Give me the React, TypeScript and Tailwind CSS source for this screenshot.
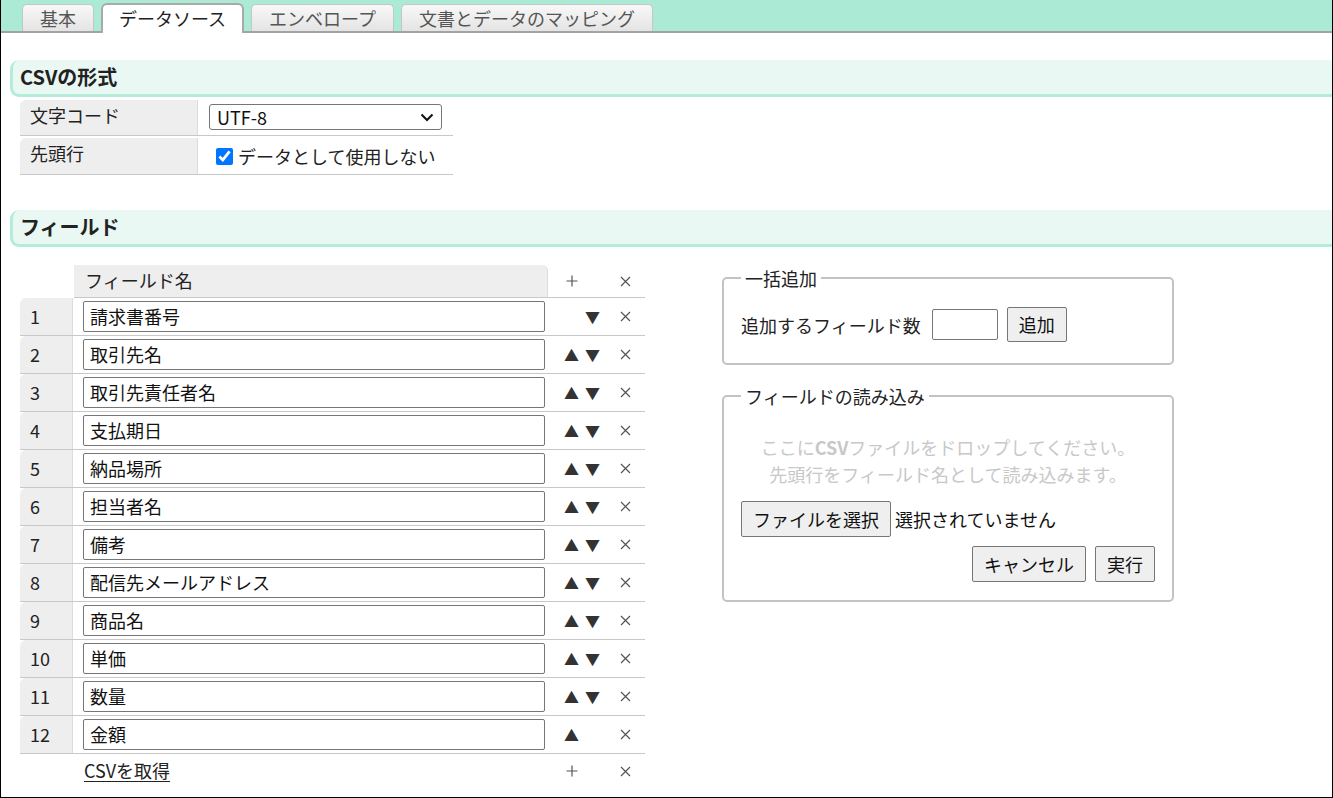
import React from 'react';

const fields = ['請求書番号','取引先名','取引先責任者名','支払期日','納品場所','担当者名','備考','配信先メールアドレス','商品名','単価','数量','金額'];

function Tab({ label, w, active }: { label: string; w: string; active?: boolean }) {
  if (active) {
    return (
      <div className={`${w} h-[30px] -mb-[2px] bg-white border-2 border-b-0 border-[#a9a9a9] rounded-t-[6px] flex items-center justify-center text-[#222] pb-[2px]`}>
        {label}
      </div>
    );
  }
  return (
    <div className={`${w} h-[27px] bg-gradient-to-b from-[#f8f8f8] to-[#e4e4e4] border border-b-0 border-[#c6c6c6] rounded-t-[5px] flex items-center justify-center text-[#555] pb-[1px]`}>
      {label}
    </div>
  );
}

function SectionHeader({ title }: { title: string }) {
  return (
    <div className="ml-[9px] h-[37px] bg-[#e9f8f3] border-l-[3px] border-b-[3px] border-[#b5ecd9] rounded-l-[9px] flex items-center pl-[7px]">
      <span className="font-bold text-[20px] text-[#222] leading-none">{title}</span>
    </div>
  );
}

function Btn({ children, className = '' }: { children: React.ReactNode; className?: string }) {
  return (
    <div className={`bg-[#efefef] border border-[#767676] rounded-[2px] flex items-center justify-center text-[#111] pb-[1px] ${className}`}>
      {children}
    </div>
  );
}

function Cross() {
  return (
    <svg width="11" height="11" viewBox="0 0 11 11" className="mx-auto">
      <path d="M1 1 L10 10 M10 1 L1 10" stroke="#555" strokeWidth="1.2" fill="none" />
    </svg>
  );
}

function Plus() {
  return (
    <svg width="12" height="12" viewBox="0 0 12 12" className="mx-auto">
      <path d="M6 0.5 V11.5 M0.5 6 H11.5" stroke="#555" strokeWidth="1.2" fill="none" />
    </svg>
  );
}

export default function App() {
  return (
    <div className="w-[1333px] h-[798px] border-l border-r border-b border-black bg-white overflow-hidden font-['Noto_Sans_CJK_JP','Noto_Sans',sans-serif] text-[18px] leading-[24px] text-[#222]">
      {/* Tab bar */}
      <div className="h-[33px] bg-[#abebd6] border-b-2 border-[#a3a3a3] flex items-end pl-[21px] gap-[7px]">
        <Tab label="基本" w="w-[72px]" />
        <Tab label="データソース" w="w-[143px]" active />
        <Tab label="エンベロープ" w="w-[143px]" />
        <Tab label="文書とデータのマッピング" w="w-[252px]" />
      </div>

      <div className="mt-[27px]">
        <SectionHeader title="CSVの形式" />
      </div>

      {/* CSV format table */}
      <div className="mt-[3px] ml-[19px] w-[433px]">
        <div className="flex h-[36px] border-b border-[#c8c8c8]">
          <div className="w-[178px] bg-[#eeeeee] rounded-tl-[6px] border-r border-[#dcdcdc] pl-[10px] pt-[3px]">文字コード</div>
          <div className="flex-1 pl-[11px] pt-[4px]">
            <div className="w-[233px] h-[26px] border border-[#767676] rounded-[3px] flex items-center justify-between pl-[7px] pr-[7px] text-[#111]">
              <span>UTF-8</span>
              <svg width="14" height="9" viewBox="0 0 14 9"><polyline points="1.5,1.5 7,7 12.5,1.5" fill="none" stroke="#111" strokeWidth="2" /></svg>
            </div>
          </div>
        </div>
        <div className="flex h-[37px] mt-[2px] border-b border-[#c8c8c8]">
          <div className="w-[178px] bg-[#eeeeee] rounded-tl-[6px] border-r border-[#dcdcdc] pl-[10px] pt-[3px]">先頭行</div>
          <div className="flex-1 pl-[18px] flex items-center">
            <input type="checkbox" defaultChecked className="w-[17px] h-[17px] accent-[#0075ff] m-0" />
            <span className="ml-[5px]">データとして使用しない</span>
          </div>
        </div>
      </div>

      <div className="mt-[35px]">
        <SectionHeader title="フィールド" />
      </div>

      <div className="flex mt-[18px]">
        {/* Field table */}
        <div className="ml-[19px] w-[625px]">
          {/* header */}
          <div className="flex h-[33px]">
            <div className="w-[54px]" />
            <div className="flex-1 flex border-b border-[#c8c8c8]">
              <div className="w-[474px] bg-[#eeeeee] rounded-tr-[6px] border-r border-[#dcdcdc] pl-[11px] flex items-center pb-[2px]">フィールド名</div>
              <div className="flex items-center pl-[13px]">
                <span className="w-[21px]"><Plus /></span>
                <span className="w-[21px]" />
                <span className="w-[22px] ml-[11px]"><Cross /></span>
              </div>
            </div>
          </div>
          {fields.map((f, i) => (
            <div key={i} className="flex h-[38px] border-b border-[#c8c8c8]">
              <div className="w-[53px] bg-[#eeeeee] rounded-tl-[6px] border-r border-[#dcdcdc] pl-[10px] flex items-center pb-[2px]">{i + 1}</div>
              <div className="w-[475px] pl-[10px] flex items-center">
                <div className="w-[462px] h-[31px] border border-[#767676] rounded-[2px] pl-[6px] pb-[2px] flex items-center text-[#111]">{f}</div>
              </div>
              <div className="flex items-center pl-[13px] text-[#333]">
                <span className="w-[21px] text-center text-[15px]">{i > 0 ? '▲' : ''}</span>
                <span className="w-[21px] text-center text-[15px]">{i < fields.length - 1 ? '▼' : ''}</span>
                <span className="w-[22px] ml-[11px]"><Cross /></span>
              </div>
            </div>
          ))}
          <div className="flex h-[34px]">
            <div className="w-[64px]" />
            <div className="w-[464px] flex items-center pb-[2px]">
              <span className="underline underline-offset-[3px] text-[#222]">CSVを取得</span>
            </div>
            <div className="flex items-center pl-[13px]">
              <span className="w-[21px]"><Plus /></span>
              <span className="w-[21px]" />
              <span className="w-[22px] ml-[11px]"><Cross /></span>
            </div>
          </div>
        </div>

        {/* Right column */}
        <div className="ml-[77px] mt-[4px] flex flex-col gap-[22px]">
          <fieldset className="w-[452px] border-2 border-[#c3c3c3] rounded-[5px] px-[17px] pt-[20px] pb-[21px]">
            <legend className="px-[4px] leading-[18px]">一括追加</legend>
            <div className="flex items-center">
              <span>追加するフィールド数</span>
              <div className="ml-[11px] w-[66px] h-[31px] border border-[#767676] rounded-[2px]" />
              <Btn className="ml-[9px] w-[60px] h-[35px]">追加</Btn>
            </div>
          </fieldset>
          <fieldset className="w-[452px] border-2 border-[#c3c3c3] rounded-[5px] px-[17px] pt-[29px] pb-[18px]">
            <legend className="px-[4px] leading-[18px]">フィールドの読み込み</legend>
            <div className="text-center text-[#c8c8c8] leading-[27px]">
              <div>ここに<span className="font-bold">CSV</span>ファイルをドロップしてください。</div>
              <div>先頭行をフィールド名として読み込みます。</div>
            </div>
            <div className="flex items-center mt-[13px]">
              <Btn className="w-[150px] h-[36px]">ファイルを選択</Btn>
              <span className="ml-[4px] text-[#111] pb-[1px]">選択されていません</span>
            </div>
            <div className="flex justify-end mt-[9px]">
              <Btn className="w-[114px] h-[36px]">キャンセル</Btn>
              <Btn className="ml-[9px] w-[60px] h-[36px]">実行</Btn>
            </div>
          </fieldset>
        </div>
      </div>
    </div>
  );
}
